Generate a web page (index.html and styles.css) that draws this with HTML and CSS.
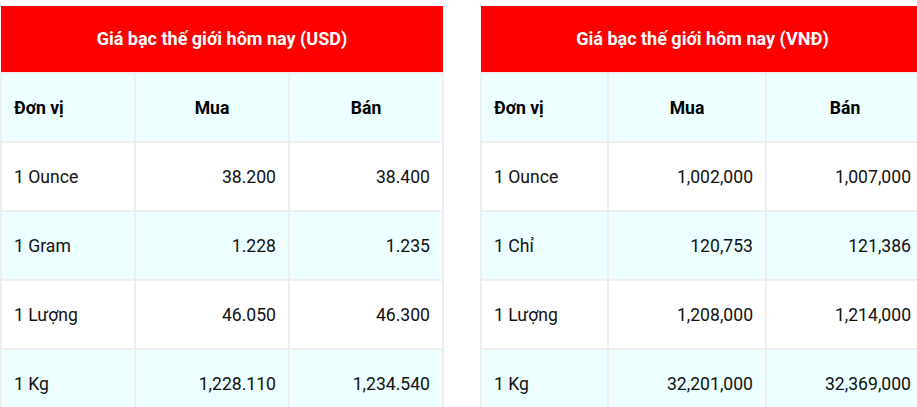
FILE: index.html
```html
<!DOCTYPE html>
<html lang="vi">
<head>
<meta charset="utf-8">
<link rel="stylesheet" href="styles.css">
</head>
<body>
<div class="wrap">
  <table class="price usd">
    <colgroup><col class="c1"><col class="c2"><col class="c3"></colgroup>
    <thead>
      <tr class="title"><th colspan="3">Giá bạc thế giới hôm nay (USD)</th></tr>
      <tr class="head"><th class="unit">Đơn vị</th><th>Mua</th><th>Bán</th></tr>
    </thead>
    <tbody>
      <tr><td>1 Ounce</td><td class="num">38.200</td><td class="num">38.400</td></tr>
      <tr><td>1 Gram</td><td class="num">1.228</td><td class="num">1.235</td></tr>
      <tr><td>1 Lượng</td><td class="num">46.050</td><td class="num">46.300</td></tr>
      <tr><td>1 Kg</td><td class="num">1,228.110</td><td class="num">1,234.540</td></tr>
    </tbody>
  </table>
  <table class="price vnd">
    <colgroup><col class="c1"><col class="c2"><col class="c3"></colgroup>
    <thead>
      <tr class="title"><th colspan="3">Giá bạc thế giới hôm nay (VNĐ)</th></tr>
      <tr class="head"><th class="unit">Đơn vị</th><th>Mua</th><th>Bán</th></tr>
    </thead>
    <tbody>
      <tr><td>1 Ounce</td><td class="num">1,002,000</td><td class="num">1,007,000</td></tr>
      <tr><td>1 Chỉ</td><td class="num">120,753</td><td class="num">121,386</td></tr>
      <tr><td>1 Lượng</td><td class="num">1,208,000</td><td class="num">1,214,000</td></tr>
      <tr><td>1 Kg</td><td class="num">32,201,000</td><td class="num">32,369,000</td></tr>
    </tbody>
  </table>
</div>
</body>
</html>
```

FILE: styles.css
```css
html, body {
  margin: 0;
  padding: 0;
  background: #ffffff;
  overflow: hidden;
}
body {
  font-family: Roboto, "Liberation Sans", Arial, sans-serif;
  font-size: 17.6px;
  color: #111111;
}
.wrap {
  display: flex;
  gap: 36px;
  padding-top: 6px;
  overflow: hidden;
}
.price {
  border-collapse: collapse;
  table-layout: fixed;
  flex: none;
}
.usd { width: 444px; }
.usd .c1 { width: 134px; }
.usd .c2 { width: 154px; }
.usd .c3 { width: 154px; }
.vnd { width: 445px; }
.vnd .c1 { width: 127px; }
.vnd .c2 { width: 158px; }
.vnd .c3 { width: 158px; }

.price td, .price th {
  border: 2px solid #eeeeee;
  padding: 0 12px;
  height: 67px;
  line-height: 20px;
  vertical-align: middle;
  text-align: left;
  font-weight: 400;
}
.price .title th {
  background: #ff0000;
  color: #ffffff;
  font-weight: 700;
  font-size: 18px;
  text-align: center;
  border-top: 0;
  border-left: 0;
  border-right: 0;
  height: 66px;
}
.price .head th {
  background: #ecfeff;
  font-weight: 700;
  text-align: center;
  color: #000000;
}
.price .head th.unit {
  text-align: left;
}
.price tbody tr:nth-child(even) td {
  background: #ecfeff;
}
.price td.num {
  text-align: right;
}
```
